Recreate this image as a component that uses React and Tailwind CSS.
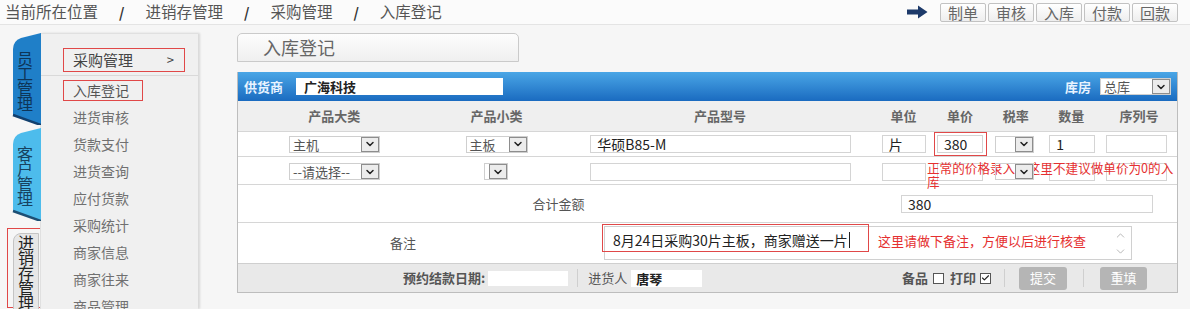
import { ChevronDown, ChevronUp, Check } from "lucide-react";

const crumbs = ["当前所在位置", "进销存管理", "采购管理", "入库登记"];
const actions = ["制单", "审核", "入库", "付款", "回款"];
const menu = ["进货审核", "货款支付", "进货查询", "应付货款", "采购统计", "商家信息", "商家往来", "商品管理"];
// column widths of the entry table, left to right
const cols = ["w-[193px]", "w-[132px]", "w-[316px]", "w-[52px]", "w-[61px]", "w-[51px]", "w-[60px]", "w-[76px]"];
const heads = ["产品大类", "产品小类", "产品型号", "单位", "单价", "税率", "数量", "序列号"];

function Select({ label, className = "", bg = "bg-white" }) {
  return (
    <div className={`flex items-center h-[17px] ${bg} border border-[#cfcfcf] ${className}`}>
      <span className="flex-1 pl-[3px] text-[13px] leading-[15px] text-[#555] whitespace-nowrap">{label}</span>
      <span className="w-[18px] h-[15px] flex items-center justify-center bg-[#ececec] border border-[#8d8d8d]">
        <ChevronDown size={12} strokeWidth={3} className="text-[#222]" />
      </span>
    </div>
  );
}

function Input({ value, className = "" }) {
  return (
    <div className={`h-[18px] bg-white border border-[#d4d4d4] pl-[6px] text-[14px] leading-[16px] text-[#222] whitespace-nowrap ${className}`}>
      {value}
    </div>
  );
}

function SideTab({ chars, fill, edge, text, height }) {
  return (
    <div className="relative w-[30px] ml-[11px] pt-[18px] pl-[3px]" style={{ height }}>
      <svg className="absolute inset-0" width="30" height={height} viewBox={`0 0 30 ${height}`}>
        <path d={`M2 16 Q2 8 10 5 L30 0 L30 ${height} L2 ${height - 10} Z`} fill={fill} />
        <path d={`M2 ${height - 10} L30 ${height}`} stroke={edge} strokeWidth="2.5" />
      </svg>
      <div className={`relative w-[22px] [writing-mode:vertical-rl] text-[16px] leading-[22px] tracking-[-1px] ${text}`}>
        {chars}
      </div>
    </div>
  );
}

function Box({ checked }) {
  return (
    <span className="w-[11px] h-[11px] border border-[#555] bg-white flex items-center justify-center">
      {checked && <Check size={10} strokeWidth={3} className="text-[#222]" />}
    </span>
  );
}

export default function App() {
  return (
    <div className="w-[1190px] h-[309px] overflow-hidden bg-[#f6f6f6] font-['Noto_Sans_CJK_SC',sans-serif]">
      {/* Breadcrumb + actions */}
      <header className="h-[25px] flex items-center justify-between bg-[#fbfbfb] border-b border-[#e4e4e4] pl-[5px] pr-[12px]">
        <div className="flex items-center gap-[21px] text-[15.5px] leading-none text-[#555]">
          {crumbs.map((c, i) => (
            <div key={c} className="flex items-center gap-[21px]">
              {i > 0 && <span className="font-bold text-[#333] text-[14px]">/</span>}
              <span>{c}</span>
            </div>
          ))}
        </div>
        <div className="flex items-center">
          <svg width="21" height="14" viewBox="0 0 21 14" className="mr-[12px]">
            <path d="M0 4.5h11V0.5l9.5 6.5-9.5 6.5v-4H0z" fill="#1d3a6a" />
          </svg>
          <div className="flex gap-[2px]">
            {actions.map((a) => (
              <span key={a} className="w-[46px] h-[19px] flex items-center justify-center rounded-[2px] border border-[#c2c2c2] bg-gradient-to-b from-white to-[#eeeeee] text-[15px] leading-none text-[#666]">
                {a}
              </span>
            ))}
          </div>
        </div>
      </header>

      <div className="flex pt-[8px]">
        {/* Vertical module tabs */}
        <div className="w-[40px] flex flex-col">
          <SideTab chars="员工管理" fill="#1f7fc8" edge="#12406e" text="text-[#0e3558]" height={92} />
          <div className="mt-[3px]">
            <SideTab chars="客户管理" fill="#4dbcec" edge="#1d4f74" text="text-[#17425f]" height={93} />
          </div>
          <div className="mt-[7px] ml-[7px] w-[36px] h-[80px] border border-[#e04848] pt-[4px] pl-[5px]">
            <div className="w-[26px] h-[80px] rounded-tl-[8px] bg-[#e7e7e7] border border-[#c4c4c4] flex justify-center pt-[1px]">
              <span className="[writing-mode:vertical-rl] text-[16px] leading-[22px] tracking-[-1px] text-[#222]">进销存管理</span>
            </div>
          </div>
        </div>

        {/* Sub menu */}
        <aside className="w-[158px] h-[276px] overflow-hidden bg-[#f0f0f0] border-t border-l border-[#e0e0e0] shadow-[2px_0_2px_rgba(0,0,0,0.12)] pt-[14px]">
          <div className="ml-[22px] w-[122px] h-[24px] border border-[#e04848] flex items-center justify-between pl-[9px] pr-[10px] text-[15px] text-[#444]">
            <span>采购管理</span>
            <span className="text-[13px]">&gt;</span>
          </div>
          <div className="mt-[3px] h-px bg-[#d9d9d9]" />
          <div className="mt-[4px] ml-[22px] w-[80px] h-[21px] border border-[#e04848] flex items-center pl-[9px] text-[14px] text-[#555]">
            入库登记
          </div>
          <div className="mt-[3px]">
            {menu.map((m) => (
              <div key={m} className="h-[27px] flex items-center pl-[32px] text-[14px] text-[#707070]">
                {m}
              </div>
            ))}
          </div>
        </aside>

        {/* Main */}
        <main className="ml-[39px] w-[941px]">
          <div className="w-[282px] h-[29px] rounded-t-[5px] border border-[#cacaca] bg-gradient-to-b from-[#fdfdfd] to-[#efefef] flex items-center pl-[25px] text-[18px] text-[#666]">
            入库登记
          </div>

          <div className="mt-[10px] border-x border-b border-[#bdbdbd]">
            {/* Supplier bar */}
            <div className="h-[29px] flex items-center justify-between bg-gradient-to-b from-[#4aa6e6] to-[#1a6bc0] pl-[6px] pr-[6px]">
              <div className="flex items-center">
                <span className="text-[13px] font-bold text-[#e8f3ff]">供货商</span>
                <div className="ml-[13px] w-[207px] h-[17px] bg-white pl-[8px] text-[13px] leading-[17px] font-bold text-[#222]">广海科技</div>
              </div>
              <div className="flex items-center">
                <span className="text-[13px] font-bold text-[#e8f3ff]">库房</span>
                <Select label="总库" className="ml-[9px] w-[71px]" />
              </div>
            </div>

            {/* Head */}
            <div className="h-[31px] flex bg-[#efefef] border-b border-[#d6d6d6]">
              {heads.map((h, i) => (
                <div key={h} className={`${cols[i]} flex items-center justify-center text-[13px] font-bold text-[#666]`}>
                  {h}
                </div>
              ))}
            </div>

            {/* Row 1 */}
            <div className="h-[25px] flex items-center bg-white border-b border-[#d6d6d6]">
              <div className={cols[0]}><Select label="主机" className="ml-[51px] w-[91px]" /></div>
              <div className={cols[1]}><Select label="主板" className="ml-[35px] w-[62px]" /></div>
              <div className={cols[2]}><Input value="华硕B85-M" className="ml-[28px] w-[261px]" /></div>
              <div className={cols[3]}><Input value="片" className="ml-[4px] w-[44px]" /></div>
              <div className={cols[4]}>
                <div className="ml-[4px] w-[53px] h-[24px] border border-[#e04848] flex items-center justify-center">
                  <Input value="380" className="w-[46px]" />
                </div>
              </div>
              <div className={cols[5]}><Select label="" className="ml-[5px] w-[39px]" /></div>
              <div className={cols[6]}><Input value="1" className="ml-[8px] w-[46px]" /></div>
              <div className={cols[7]}><Input value="" className="ml-[5px] w-[61px]" /></div>
            </div>

            {/* Row 2 */}
            <div className="relative h-[28px] flex items-start pt-[6px] bg-white border-b border-[#d6d6d6]">
              <div className={cols[0]}><Select label="--请选择--" className="ml-[51px] w-[91px]" /></div>
              <div className={cols[1]}><Select label="" className="ml-[53px] w-[24px]" /></div>
              <div className={cols[2]}><Input value="" className="ml-[28px] w-[261px]" /></div>
              <div className={cols[3]}><Input value="" className="ml-[4px] w-[44px]" /></div>
              <div className={cols[4]}><Input value="" className="ml-[7px] w-[46px]" /></div>
              <div className={cols[5]}><Select label="" bg="bg-transparent" className="relative z-10 ml-[5px] w-[39px]" /></div>
              <div className={cols[6]}><Input value="" className="ml-[8px] w-[46px]" /></div>
              <div className={cols[7]}><Input value="" className="ml-[5px] w-[61px]" /></div>
              <div className="absolute left-[689px] top-[4px] text-[12.6px] leading-[14px] text-[#e53030] whitespace-nowrap">
                正常的价格录入，这里不建议做单价为0的入
                <br />
                库
              </div>
            </div>

            {/* Total */}
            <div className="h-[38px] flex items-center bg-white border-b border-[#d6d6d6]">
              <div className="w-[641px] text-center text-[13px] text-[#555]">合计金额</div>
              <Input value="380" className="ml-[22px] w-[252px] pl-[5px]" />
            </div>

            {/* Remark */}
            <div className="h-[41px] flex bg-white border-b border-[#cfcfcf]">
              <div className="w-[330px] flex items-center justify-center text-[13px] text-[#555]">备注</div>
              <div className="relative mt-[3px] ml-[36px] w-[528px] h-[34px] border border-[#d0d0d0] bg-white">
                <div className="absolute left-[-3px] top-[-3px] w-[267px] h-[28px] border border-[#e04848]" />
                <div className="absolute left-[8px] top-[3px] flex items-center text-[14px] leading-[20px] text-[#222]">
                  8月24日采购30片主板，商家赠送一片
                  <span className="ml-[1px] w-px h-[16px] bg-[#222]" />
                </div>
                <div className="absolute left-[273px] top-[5px] text-[13px] leading-[18px] text-[#e53030]">
                  这里请做下备注，方便以后进行核查
                </div>
                <div className="absolute right-[4px] top-[2px] flex flex-col text-[#a8a8a8]">
                  <ChevronUp size={13} strokeWidth={1.5} />
                  <ChevronDown size={13} strokeWidth={1.5} className="mt-[3px]" />
                </div>
              </div>
            </div>

            {/* Footer */}
            <div className="h-[28px] flex items-center justify-between bg-[#e9e9e9] pr-[30px]">
              <div className="flex items-center ml-[165px]">
                <span className="text-[13px] font-bold text-[#555]">预约结款日期:</span>
                <span className="ml-[3px] w-[80px] h-[15px] bg-white" />
                <span className="ml-[9px] w-px h-[18px] bg-[#cfcfcf]" />
                <span className="ml-[10px] text-[13px] text-[#555]">进货人</span>
                <span className="ml-[4px] w-[71px] h-[17px] bg-white pl-[5px] text-[13px] leading-[17px] font-bold text-[#222]">唐琴</span>
              </div>
              <div className="flex items-center">
                <span className="text-[13px] font-bold text-[#555]">备品</span>
                <span className="ml-[5px]"><Box /></span>
                <span className="ml-[6px] text-[13px] font-bold text-[#555]">打印</span>
                <span className="ml-[4px]"><Box checked /></span>
                <span className="ml-[13px] w-px h-[18px] bg-[#cfcfcf]" />
                <span className="ml-[14px] w-[48px] h-[23px] rounded-[3px] bg-[#b5b5b5] flex items-center justify-center text-[13px] text-white">提交</span>
                <span className="ml-[16px] w-px h-[18px] bg-[#cfcfcf]" />
                <span className="ml-[16px] w-[47px] h-[23px] rounded-[3px] bg-[#b5b5b5] flex items-center justify-center text-[13px] text-white">重填</span>
              </div>
            </div>
          </div>
        </main>
      </div>
    </div>
  );
}
